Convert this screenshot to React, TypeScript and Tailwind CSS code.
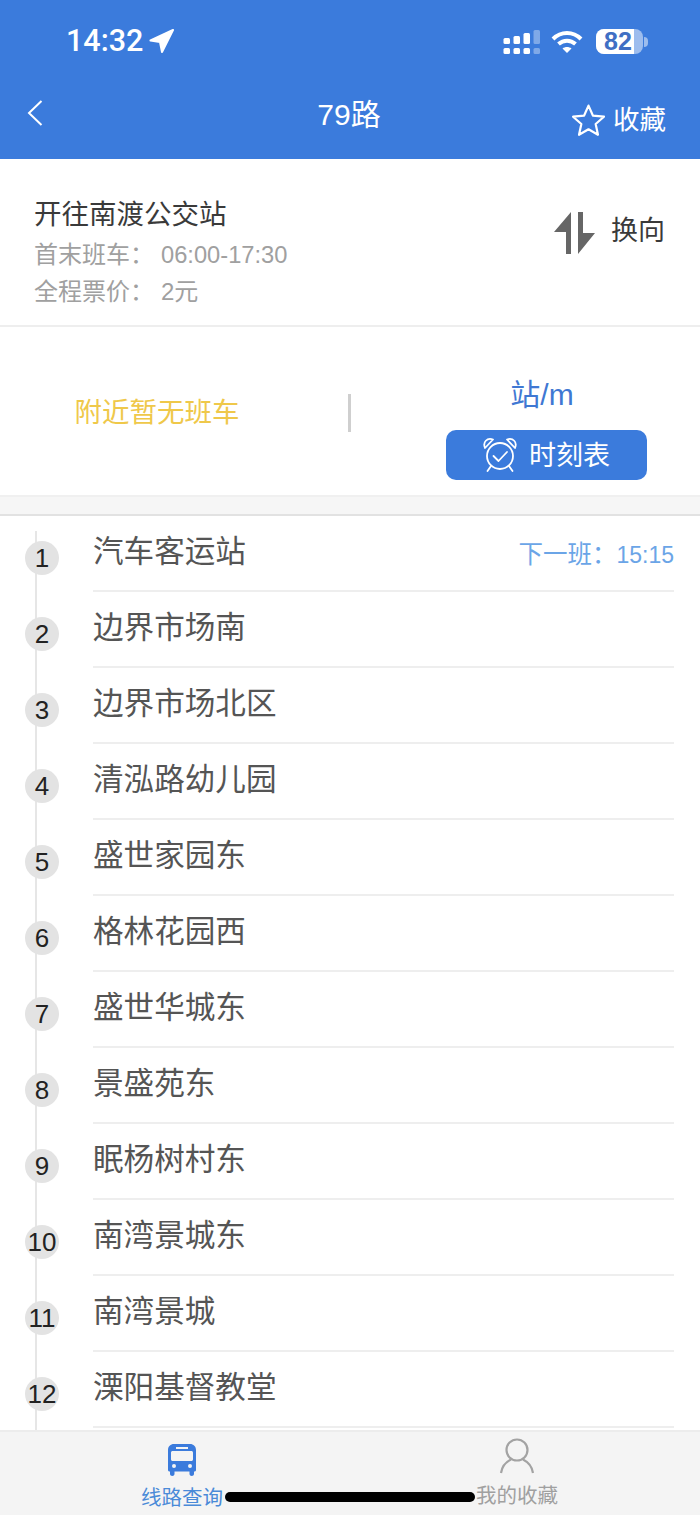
import React from 'react';

const stations = [
  '汽车客运站',
  '边界市场南',
  '边界市场北区',
  '清泓路幼儿园',
  '盛世家园东',
  '格林花园西',
  '盛世华城东',
  '景盛苑东',
  '眠杨树村东',
  '南湾景城东',
  '南湾景城',
  '溧阳基督教堂',
];

function StatusBar() {
  return (
    <div className="flex h-[82px] items-start justify-between pl-[66px] pr-[52px] pt-[23px] text-white">
      <div className="flex items-center gap-[6px]">
        <span className="font-['Roboto'] text-[30.5px] font-medium leading-[36px]">14:32</span>
        <svg width="25" height="24" viewBox="0 0 25 24" fill="white">
          <path d="M24 1 L1.5 11.5 L11 13 L13 23 Z" stroke="white" strokeWidth="2" strokeLinejoin="round" />
        </svg>
      </div>
      <div className="mt-[6px] flex items-center">
        <svg width="37" height="24" viewBox="0 0 37 24" fill="white">
          <rect x="0.5" y="8" width="6.5" height="6" rx="1.5" />
          <rect x="0.5" y="18" width="6.5" height="6" rx="1.5" />
          <rect x="10.5" y="6" width="6.5" height="8" rx="1.5" />
          <rect x="10.5" y="18" width="6.5" height="6" rx="1.5" />
          <rect x="20.5" y="3" width="6.5" height="11" rx="1.5" />
          <rect x="20.5" y="18" width="6.5" height="6" rx="1.5" />
          <rect x="30.5" y="0" width="6.5" height="14" rx="1.5" opacity="0.35" />
          <rect x="30.5" y="18" width="6.5" height="6" rx="1.5" opacity="0.35" />
        </svg>
        <svg className="ml-[11px]" width="32" height="24" viewBox="0 0 32 24" fill="none" stroke="white" strokeWidth="4">
          <path d="M2 9 C10 1, 22 1, 30 9" />
          <path d="M7.5 14 C12.5 9.5, 19.5 9.5, 24.5 14" />
          <path d="M16 23 L11.5 18.5 C14 16.5, 18 16.5, 20.5 18.5 Z" fill="white" stroke="none" />
        </svg>
        <div className="relative ml-[13px] flex h-[25px] w-[47px] items-center justify-center rounded-[8px] bg-white/50">
          <div className="absolute inset-y-0 left-0 w-[38px] rounded-l-[8px] bg-white" />
          <span className="relative pr-[3px] text-[25px] font-bold leading-none text-[#3f6fc4]">82</span>
        </div>
        <div className="ml-[1px] h-[10px] w-[4px] rounded-r-full bg-white/50" />
      </div>
    </div>
  );
}

function NavBar() {
  return (
    <div className="relative flex h-[77px] items-start justify-between pl-[27px] pr-[34px] text-white">
      <svg className="mt-[18px]" width="16" height="26" viewBox="0 0 16 26" fill="none" stroke="white" strokeWidth="2">
        <path d="M14.5 1 L2 13 L14.5 25" />
      </svg>
      <span className="absolute left-0 right-[2px] top-[15px] text-center text-[30px] leading-[36px]">79路</span>
      <div className="mt-[20px] flex items-center gap-[7px]">
        <svg width="35" height="35" viewBox="0 0 24 24" fill="none" stroke="white" strokeWidth="1.5" strokeLinejoin="round">
          <path d="M12 1.8 L15 8.6 L22.6 9.4 L16.9 14.4 L18.5 21.8 L12 18 L5.5 21.8 L7.1 14.4 L1.4 9.4 L9 8.6 Z" />
        </svg>
        <span className="text-[26.5px] leading-[36px]">收藏</span>
      </div>
    </div>
  );
}

function RouteInfo() {
  return (
    <div className="flex h-[168px] justify-between border-b-2 border-[#eeeeee] pl-[34px] pr-[35px]">
      <div className="pt-[38px]">
        <div className="text-[27.5px] leading-[36px] text-[#3a3a3a]">开往南渡公交站</div>
        <div className="mt-[4px] flex items-baseline leading-[36px] text-[#a0a0a0]">
          <span className="w-[127px] text-[24px]">首末班车：</span>
          <span className="text-[23.7px]">06:00-17:30</span>
        </div>
        <div className="mt-[1px] flex items-baseline leading-[36px] text-[#a0a0a0]">
          <span className="w-[127px] text-[24px]">全程票价：</span>
          <span className="text-[24px]">2元</span>
        </div>
      </div>
      <div className="flex items-start pt-[53px]">
        <svg width="41" height="42" viewBox="0 0 41 42" fill="#666666">
          <path d="M17 0 L17 42 L12 42 L12 20 L0 20 Z" />
          <path d="M24 0 L29 0 L29 21 L41 21 L24 42 Z" />
        </svg>
        <span className="ml-[16px] mt-[1px] text-[27px] leading-[36px] text-[#3a3a3a]">换向</span>
      </div>
    </div>
  );
}

function Arrival() {
  return (
    <div className="flex h-[168px] items-center">
      <div className="flex w-[348px] justify-center pr-[34px] pt-[4px] text-[27.5px] text-[#efc84a]">附近暂无班车</div>
      <div className="mt-[4px] h-[38px] w-[3px] bg-[#cfcfcf]" />
      <div className="flex flex-1 flex-col items-center pl-[41px] pt-[32px]">
        <div className="mr-[8px] text-[30px] leading-[40px] text-[#3f78d3]">站/m</div>
        <div className="mt-[15px] flex h-[50px] w-[201px] items-center justify-center gap-[11px] rounded-[10px] bg-[#3b7bdc] text-white">
          <svg width="36" height="36" viewBox="0 0 36 36" fill="none" stroke="white" strokeWidth="1.8" strokeLinecap="round" strokeLinejoin="round">
            <circle cx="18" cy="19" r="13" />
            <path d="M11.5 19 L16.5 24 L25 15" />
            <path d="M3 11 C0.5 5, 5 0.5, 11 2.5 Z" />
            <path d="M33 11 C35.5 5, 31 0.5, 25 2.5 Z" />
            <path d="M9 29 L5.5 34" />
            <path d="M27 29 L30.5 34" />
          </svg>
          <span className="mt-[4px] text-[27px] leading-none">时刻表</span>
        </div>
      </div>
    </div>
  );
}

function StationRow({ index, name }: { index: number; name: string }) {
  return (
    <div className="flex h-[76px] shrink-0">
      <div className="w-[93px] pl-[25px] pt-[25px]">
        <div className="relative flex h-[34px] w-[34px] items-center justify-center rounded-full bg-[#e3e3e3] text-[26px] leading-none text-[#222222]">
          {index}
        </div>
      </div>
      <div className="mr-[26px] flex flex-1 justify-between border-b-2 border-[#eeeeee] pt-[15px]">
        <span className="text-[30.6px] leading-[41px] text-[#555555]">{name}</span>
        {index === 1 && (
          <span className="flex items-baseline pt-[8px] leading-[32px] text-[#6ba5e7]">
            <span className="text-[24.5px]">下一班：</span>
            <span className="text-[23px]">15:15</span>
          </span>
        )}
      </div>
    </div>
  );
}

function TabBar() {
  return (
    <div className="relative flex h-[85px] shrink-0 border-t-2 border-[#ececec] bg-[#f4f4f4] pl-[141px]">
      <div className="flex w-[82px] flex-col items-center pt-[12px]">
        <svg width="28" height="32" viewBox="0 0 28 32" fill="#3b7bdc">
          <path
            fillRule="evenodd"
            d="M6 0 H22 C25.5 0 28 2.5 28 6 V26 C28 27 27 27.5 26 27.5 V30 C26 32.5 21.5 32.5 21.5 30 V27.5 H6.5 V30 C6.5 32.5 2 32.5 2 30 V27.5 C1 27.5 0 27 0 26 V6 C0 2.5 2.5 0 6 0 Z M8 3 V5 H20 V3 Z M5 7 C3.5 7 3 7.5 3 9 V15 C3 16.5 3.5 17 5 17 H23 C24.5 17 25 16.5 25 15 V9 C25 7.5 24.5 7 23 7 Z M4 22 A2 2 0 1 0 8 22 A2 2 0 1 0 4 22 Z M20 22 A2 2 0 1 0 24 22 A2 2 0 1 0 20 22 Z"
          />
        </svg>
        <span className="mt-[9px] whitespace-nowrap text-[20.5px] leading-[26px] text-[#4a8ad8]">线路查询</span>
      </div>
      <div className="ml-[253px] flex w-[82px] flex-col items-center pt-[6px]">
        <svg width="36" height="36" viewBox="0 0 36 36" fill="none" stroke="#a3a3a3" strokeWidth="2.2">
          <circle cx="18" cy="12" r="10.5" />
          <path d="M2 35 C3 28 8 23.5 12 21.5" />
          <path d="M34 35 C33 28 28 23.5 24 21.5" />
        </svg>
        <span className="mt-[9px] whitespace-nowrap text-[20.5px] leading-[26px] text-[#a0a0a0]">我的收藏</span>
      </div>
      <div className="absolute left-[225px] top-[60px] h-[10px] w-[250px] rounded-full bg-black" />
    </div>
  );
}

export default function App() {
  return (
    <div className="flex h-[1515px] w-[700px] flex-col overflow-hidden bg-white font-['Liberation_Sans','Noto_Sans_CJK_SC',sans-serif]">
      <div className="h-[159px] shrink-0 bg-[#3b7bdc]">
        <StatusBar />
        <NavBar />
      </div>
      <RouteInfo />
      <Arrival />
      <div className="h-[21px] shrink-0 border-y-2 border-t-[#f0f0f0] border-b-[#e2e2e2] bg-[#f6f6f6]" />
      <div className="relative flex min-h-0 flex-1 flex-col overflow-hidden">
        {/* vertical line behind the badges */}
        <div className="absolute bottom-0 left-[35px] top-[15px] w-[2px] bg-[#e6e6e6]" />
        {stations.map((name, i) => (
          <StationRow key={name} index={i + 1} name={name} />
        ))}
      </div>
      <TabBar />
    </div>
  );
}
